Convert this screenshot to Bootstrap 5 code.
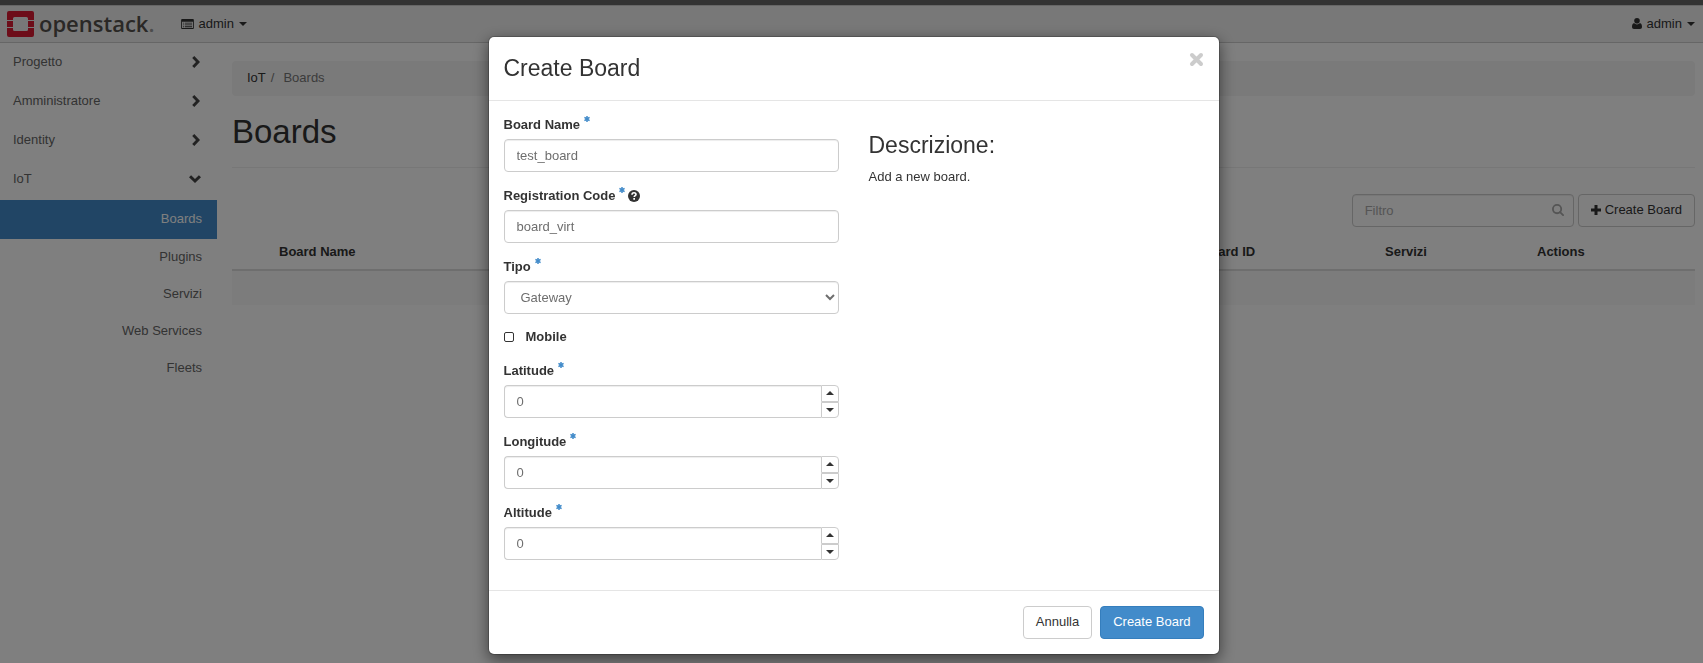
<!DOCTYPE html>
<html lang="it">
<head>
<meta charset="utf-8">
<meta name="viewport" content="width=device-width, initial-scale=1">
<title>Boards - OpenStack Dashboard</title>
<link href="https://cdn.jsdelivr.net/npm/bootstrap@5.3.0/dist/css/bootstrap.min.css" rel="stylesheet">
<style>
  body { font: 13px/18px "Liberation Sans", Arial, sans-serif; color: #333; background: #fff; }
  svg { display: block; fill: currentColor; flex: none; }
  a { text-decoration: none; color: #333; }

  .topbar { --bs-navbar-padding-y: 0; height: 43px; border-top: 5px solid #666; border-bottom: 1px solid #ccc; background: #f0f0f0; padding: 0 8px 0 7px; }
  .topbar-edge { box-shadow: inset 0 1px 0 #ccc; }
  .logo-mark { color: #da1a32; }
  .logo-text { font: 600 22px/30px "Open Sans", "Noto Sans", sans-serif; color: #54504c; margin-left: 5px; padding-bottom: 2px; }
  .logo-text span { color: #999; }
  .context-link { margin-left: 26px; }
  .menu-link { gap: 5px; }
  .tri-down { border: 4px solid transparent; border-top-color: #333; border-bottom: 0; }
  .tri-up { border: 4px solid transparent; border-bottom-color: #333; border-top: 0; }

  .sidebar { width: 217px; flex: none; }
  .side-link { height: 39px; padding: 0 16px 1px 13px; color: #666; }
  .side-link svg { color: #444; }
  .side-sub { height: 37px; padding: 0 15px 1px 0; color: #666; }
  .side-sub.current { height: 39px; margin-top: 1px; padding-bottom: 2px; background: #428bca; color: #fff; }

  .main-area { padding: 18px 8px 0 15px; min-width: 0; }
  .crumbs { height: 35px; padding: 0 15px 1px; background: #f5f5f5; border-radius: 4px; }
  .crumbs .breadcrumb-item + .breadcrumb-item::before { padding-right: 9px; color: #777; }
  .crumbs .breadcrumb-item + .breadcrumb-item { padding-left: 5px; color: #777; }
  .page-title { font-size: 33px; line-height: 36px; margin: 18px 0 0; padding-bottom: 17px; border-bottom: 1px solid #eee; }
  .actions-row { margin-top: 26px; gap: 4px; }
  .filter-box { width: 222px; }
  .filter-box svg { position: absolute; right: 10px; top: 10px; color: #aaa; }
  .filter-box .form-control::placeholder { color: #aaa; }

  .form-control { height: 33px; font-size: 13px; line-height: 18px; padding: 6px 12px; color: #6e6e6e; border: 1px solid #ccc; border-radius: 4px; box-shadow: inset 0 1px 1px rgba(0,0,0,.075); }
  select.form-control { appearance: auto; background: #fff; }
  .btn { height: 33px; font-size: 13px; line-height: 18px; padding: 5px 12px 7px; border-radius: 4px; }
  .btn-plain { --bs-btn-color: #333; --bs-btn-bg: #fff; --bs-btn-border-color: #ccc; }
  .btn-primary { --bs-btn-bg: #428bca; --bs-btn-border-color: #357ebd; }

  .data-table { table-layout: fixed; margin: 6px 0 0; --bs-table-color: #333; --bs-table-bg: transparent; }
  .data-table th { padding: 10px 8px 8px; border-bottom: 2px solid #ddd; color: #333; }
  .data-table td { height: 35px; padding: 0; border: 0; background: #f9f9f9; }
  .w-check { width: 39px; } .w-id { width: 184px; } .w-serv { width: 152px; } .w-act { width: 166px; }

  .modal { padding-left: 4px; }
  .create-dialog { max-width: 732px; margin: 36px auto 0; }
  .modal-content { color: #333; border: 1px solid rgba(0,0,0,.2); border-radius: 6px; box-shadow: 0 5px 15px rgba(0,0,0,.5); background-clip: padding-box; }
  .modal-header { padding: 15px; border-bottom: 1px solid #e5e5e5; }
  .modal-title { font-size: 23px; line-height: 33px; font-weight: 400; }
  .close-btn { color: #ccc; }
  .modal-body { padding: 15px; }
  .modal-body .row { --bs-gutter-x: 30px; }
  .field { margin-bottom: 15px; }
  .field > label { display: flex; align-items: center; font-weight: 700; margin-bottom: 5px; }
  .req { color: #428bca; margin: 0 0 12px 4px; }
  .help { margin: 0 0 1px 3px; }
  .check-row { height: 16px; margin-bottom: 17px; gap: 12px; font-weight: 700; }
  .check-row input { appearance: none; width: 10px; height: 10px; margin: 0; border: 1px solid #333; border-radius: 2px; background: #fff; }
  .check-row input:checked { background: #333; }
  .spin-input { appearance: textfield; border-right: 0; border-radius: 4px 0 0 4px; }
  .spin-input::-webkit-inner-spin-button { appearance: none; margin: 0; }
  .spin-col { width: 19px; }
  .spin-btn { flex: 1; padding: 0; border: 1px solid #ccc; background: #fff; }
  .spin-btn:first-child { border-top-right-radius: 4px; }
  .spin-btn:last-child { border-bottom-right-radius: 4px; }
  .desc-title { font-size: 23px; line-height: 25px; font-weight: 400; margin: 17px 0 10px; }
  .modal-footer { padding: 15px; gap: 8px; border-top: 1px solid #e5e5e5; }
  .modal-footer > * { margin: 0; }
</style>
</head>
<body>
<svg class="d-none" xmlns="http://www.w3.org/2000/svg">
  <symbol id="i-star" viewBox="0 0 12 12"><path d="M4.500 0h3v3.200L10.400 1.500l1.500 2.700L9 6l2.900 1.800-1.500 2.700L7.500 8.800V12h-3V8.800L1.600 10.500.1 7.800 3 6 .1 4.200l1.500-2.700 2.900 1.700z"/></symbol>
  <symbol id="i-right" viewBox="0 0 8 12"><path d="M2.300 0 8 6l-5.700 6L.2 9.900 4 6 .2 2.100z"/></symbol>
  <symbol id="i-down" viewBox="0 0 12 8"><path d="M0 2.300 6 8l6-5.700L9.900.2 6 4 2.100.2z"/></symbol>
</svg>

<nav class="topbar topbar-edge navbar navbar-expand d-flex justify-content-between">
  <div class="d-flex align-items-center">
    <a href="#" class="d-flex align-items-center" aria-label="openstack">
      <svg class="logo-mark" width="27" height="26" viewBox="0 0 27 26"><path d="M2 0h23a2 2 0 0 1 2 2v7h-6V7.500A1.500 1.500 0 0 0 19.500 6h-12A1.500 1.500 0 0 0 6 7.500V9H0V2a2 2 0 0 1 2-2zM0 10h6v6H0zM21 10h6v6h-6zM0 17h6v1.500A1.500 1.500 0 0 0 7.500 20h12a1.500 1.500 0 0 0 1.500-1.500V17h6v7a2 2 0 0 1-2 2H2a2 2 0 0 1-2-2z"/></svg>
      <span class="logo-text">openstack<span>.</span></span>
    </a>
    <a href="#" class="context-link menu-link d-flex align-items-center">
      <svg width="13" height="10" viewBox="0 0 14 11"><path fill-rule="evenodd" d="M1 0h12a1 1 0 0 1 1 1v9a1 1 0 0 1-1 1H1a1 1 0 0 1-1-1V1a1 1 0 0 1 1-1zm0 3v7h12V3zM2 4h1v1H2zm2 0h8v1H4zM2 6h1v1H2zm2 0h8v1H4zM2 8h1v1H2zm2 0h8v1H4z"/></svg>
      <span>admin</span><span class="tri-down"></span>
    </a>
  </div>
  <a href="#" class="menu-link d-flex align-items-center">
    <svg width="10" height="11" viewBox="0 0 10 11"><circle cx="5" cy="2.800" r="2.800"/><path d="M2.200 5C.6 5.300 0 6.800 0 8.800 0 10.200.8 11 2 11h6c1.200 0 2-.8 2-2.200C10 6.800 9.400 5.300 7.800 5 7 6 6 6.400 5 6.400S3 6 2.200 5z"/></svg>
    <span>admin</span><span class="tri-down"></span>
  </a>
</nav>

<div class="d-flex">
  <nav class="sidebar">
    <a href="#" class="side-link d-flex align-items-center justify-content-between">Progetto <svg class="me-0" width="10" height="12"><use href="#i-right"/></svg></a>
    <a href="#" class="side-link d-flex align-items-center justify-content-between">Amministratore <svg width="10" height="12"><use href="#i-right"/></svg></a>
    <a href="#" class="side-link d-flex align-items-center justify-content-between">Identity <svg width="10" height="12"><use href="#i-right"/></svg></a>
    <a href="#" class="side-link d-flex align-items-center justify-content-between">IoT <svg width="12" height="8"><use href="#i-down"/></svg></a>
    <a href="#" class="side-sub current d-flex align-items-center justify-content-end">Boards</a>
    <a href="#" class="side-sub d-flex align-items-center justify-content-end">Plugins</a>
    <a href="#" class="side-sub d-flex align-items-center justify-content-end">Servizi</a>
    <a href="#" class="side-sub d-flex align-items-center justify-content-end">Web Services</a>
    <a href="#" class="side-sub d-flex align-items-center justify-content-end">Fleets</a>
  </nav>

  <main class="main-area flex-grow-1">
    <ol class="crumbs breadcrumb align-items-center mb-0">
      <li class="breadcrumb-item"><a href="#">IoT</a></li>
      <li class="breadcrumb-item">Boards</li>
    </ol>
    <h1 class="page-title fw-normal">Boards</h1>
    <div class="actions-row d-flex justify-content-end">
      <div class="filter-box position-relative">
        <input type="search" class="form-control" placeholder="Filtro" aria-label="Filtro">
        <svg width="12" height="12" viewBox="0 0 13 13"><path d="M8.700 8.700 12 12" fill="none" stroke="currentColor" stroke-width="2" stroke-linecap="round"/><circle cx="5.500" cy="5.500" r="4.500" fill="none" stroke="currentColor" stroke-width="2"/></svg>
      </div>
      <button type="button" class="btn btn-plain d-flex align-items-center gap-1">
        <svg width="10" height="10" viewBox="0 0 10 10"><path d="M3.500 0h3v3.500H10v3H6.500V10h-3V6.500H0v-3h3.500z"/></svg>Create Board
      </button>
    </div>
    <table class="data-table table">
      <colgroup><col class="w-check"><col><col class="w-id"><col class="w-serv"><col class="w-act"></colgroup>
      <thead><tr><th></th><th scope="col">Board Name</th><th scope="col">Board ID</th><th scope="col">Servizi</th><th scope="col">Actions</th></tr></thead>
      <tbody><tr><td colspan="5"></td></tr></tbody>
    </table>
  </main>
</div>

<div class="modal-backdrop show"></div>
<div class="modal d-block" role="dialog" aria-modal="true" aria-labelledby="dlg-title">
  <div class="create-dialog modal-dialog">
    <form class="modal-content">
      <div class="modal-header align-items-start">
        <h3 class="modal-title" id="dlg-title">Create Board</h3>
        <button type="button" class="close-btn border-0 bg-transparent p-0" aria-label="Close">
          <svg width="15" height="15" viewBox="0 0 15 15"><path d="M3 3l9 9M12 3l-9 9" stroke="currentColor" stroke-width="4" stroke-linecap="round"/></svg>
        </button>
      </div>
      <div class="modal-body">
        <div class="row">
          <div class="col-6">
            <div class="field">
              <label for="f-name">Board Name <svg class="req" width="6" height="6"><use href="#i-star"/></svg></label>
              <input id="f-name" type="text" class="form-control" value="test_board">
            </div>
            <div class="field">
              <label for="f-code">Registration Code <svg class="req" width="6" height="6"><use href="#i-star"/></svg>
                <svg class="help" width="12" height="12" viewBox="0 0 12 12"><circle cx="6" cy="6" r="6"/><path d="M4 4.700C4 3.300 4.900 2.700 6 2.700s2 .7 2 1.700c0 1.300-1.800 1.300-1.800 2.700" fill="none" stroke="#fff" stroke-width="1.600"/><path d="M5.300 8.100H7v1.600H5.300z" fill="#fff"/></svg></label>
              <input id="f-code" type="text" class="form-control" value="board_virt">
            </div>
            <div class="field">
              <label for="f-type">Tipo <svg class="req" width="6" height="6"><use href="#i-star"/></svg></label>
              <select id="f-type" class="form-control"><option>Gateway</option></select>
            </div>
            <div class="check-row d-flex align-items-center">
              <input id="f-mobile" type="checkbox"><label class="m-0" for="f-mobile">Mobile</label>
            </div>
            <div class="field">
              <label for="f-lat">Latitude <svg class="req" width="6" height="6"><use href="#i-star"/></svg></label>
              <div class="d-flex">
                <input id="f-lat" type="number" class="form-control spin-input" value="0">
                <div class="spin-col d-flex flex-column">
                  <button type="button" class="spin-btn d-flex align-items-center justify-content-center" aria-label="Increase"><span class="tri-up"></span></button>
                  <button type="button" class="spin-btn d-flex align-items-center justify-content-center" aria-label="Decrease"><span class="tri-down"></span></button>
                </div>
              </div>
            </div>
            <div class="field">
              <label for="f-lon">Longitude <svg class="req" width="6" height="6"><use href="#i-star"/></svg></label>
              <div class="d-flex">
                <input id="f-lon" type="number" class="form-control spin-input" value="0">
                <div class="spin-col d-flex flex-column">
                  <button type="button" class="spin-btn d-flex align-items-center justify-content-center" aria-label="Increase"><span class="tri-up"></span></button>
                  <button type="button" class="spin-btn d-flex align-items-center justify-content-center" aria-label="Decrease"><span class="tri-down"></span></button>
                </div>
              </div>
            </div>
            <div class="field">
              <label for="f-alt">Altitude <svg class="req" width="6" height="6"><use href="#i-star"/></svg></label>
              <div class="d-flex">
                <input id="f-alt" type="number" class="form-control spin-input" value="0">
                <div class="spin-col d-flex flex-column">
                  <button type="button" class="spin-btn d-flex align-items-center justify-content-center" aria-label="Increase"><span class="tri-up"></span></button>
                  <button type="button" class="spin-btn d-flex align-items-center justify-content-center" aria-label="Decrease"><span class="tri-down"></span></button>
                </div>
              </div>
            </div>
          </div>
          <div class="col-6">
            <h3 class="desc-title">Descrizione:</h3>
            <p class="m-0">Add a new board.</p>
          </div>
        </div>
      </div>
      <div class="modal-footer">
        <button type="button" class="btn btn-plain">Annulla</button>
        <button type="submit" class="btn btn-primary">Create Board</button>
      </div>
    </form>
  </div>
</div>
<script src="https://cdn.jsdelivr.net/npm/bootstrap@5.3.0/dist/js/bootstrap.bundle.min.js"></script>
</body>
</html>
